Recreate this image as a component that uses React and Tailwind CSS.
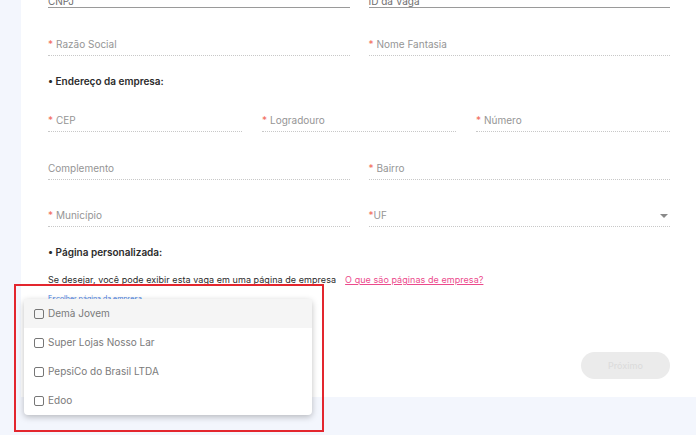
import { useState } from 'react'

const font = { fontFamily: 'Inter, "Noto Sans", sans-serif' }

function Field({ label, required, solid, className = '' }) {
  return (
    <div className={`relative ${className}`}>
      <div
        className={`h-[14px] text-[10px] leading-[14px] ${solid ? 'text-[#6f6f6f]' : 'text-[#959595]'} ${
          solid ? 'border-b border-solid border-[#9a9a9a]' : 'pb-[4px] box-content border-b border-dotted border-[#c8c8c8]'
        }`}
      >
        {required && <span className="text-[#f26b5b] mr-[3px]">*</span>}
        {label}
      </div>
    </div>
  )
}

function Heading({ children, className = '' }) {
  return (
    <div className={`h-[14px] text-[10px] leading-[14px] font-semibold text-[#2b2b2b] ${className}`}>
      • {children}
    </div>
  )
}

const empresas = ['Demà Jovem', 'Super Lojas Nosso Lar', 'PepsiCo do Brasil LTDA', 'Edoo']

export default function App() {
  const [hover, setHover] = useState(0)

  return (
    <div className="relative w-[696px] h-[435px] overflow-hidden bg-[#f3f6fd]" style={font}>
      <div className="ml-[21px] bg-white px-[26px] pb-[18px] pl-[27px]">
        <div className="-mt-[6px] grid grid-cols-2 gap-x-[19px]">
          <Field label="CNPJ" solid />
          <Field label="ID da Vaga" solid />
        </div>

        <div className="mt-[29px] grid grid-cols-2 gap-x-[19px]">
          <Field label="Razão Social" required />
          <Field label="Nome Fantasia" required />
        </div>

        <Heading className="mt-[18px]">Endereço da empresa:</Heading>

        <div className="mt-[25px] grid grid-cols-3 gap-x-[20px]">
          <Field label="CEP" required />
          <Field label="Logradouro" required />
          <Field label="Número" required />
        </div>

        <div className="mt-[29px] grid grid-cols-2 gap-x-[19px]">
          <Field label="Complemento" />
          <Field label="Bairro" required />
        </div>

        <div className="mt-[28px] grid grid-cols-2 gap-x-[19px]">
          <Field label="Município" required />
          <div className="relative">
            <div className="h-[14px] pb-[4px] box-content text-[10px] leading-[14px] text-[#959595] border-b border-dotted border-[#c8c8c8]">
              <span className="text-[#f26b5b]">*</span>UF
            </div>
            <div className="absolute right-[2px] top-[6px] w-0 h-0 border-l-[4px] border-r-[4px] border-t-[4px] border-l-transparent border-r-transparent border-t-[#8a8a8a]" />
          </div>
        </div>

        <Heading className="mt-[18px]">Página personalizada:</Heading>

        <p className="mt-[15px] h-[12px] text-[9px] leading-[12px] tracking-[0.06px] text-[#2b2b2b]">
          Se desejar, você pode exibir esta vaga em uma página de empresa
          <a href="#" className="ml-[9px] text-[#ec4a8c] underline">O que são páginas de empresa?</a>
        </p>

        <div className="mt-[8px] h-[10px] text-[7px] leading-[10px] text-[#3f7be0]">Escolher página da empresa</div>

        <div className="mt-[48px] flex justify-end">
          <button className="w-[89px] h-[27px] rounded-full bg-[#ebebeb] text-[9px] text-[#dcdcdc] font-medium">
            Próximo
          </button>
        </div>
      </div>

      <div className="absolute left-[24px] top-[299px] w-[288px] bg-white rounded-[4px] shadow-[0_2px_6px_rgba(0,0,0,0.25)]">
        {empresas.map((e, i) => (
          <div
            key={e}
            onMouseEnter={() => setHover(i)}
            className={`h-[29px] flex items-center pl-[10px] gap-[4px] text-[10px] text-[#7a7a7a] ${
              hover === i ? 'bg-[#f5f5f5]' : ''
            }`}
          >
            <span className="w-[10px] h-[10px] border-[1.5px] border-[#767676] rounded-[2px]" />
            <span>{e}</span>
          </div>
        ))}
      </div>

      <div className="absolute left-[14px] top-[284px] w-[310px] h-[148px] border-2 border-[#e3262e] pointer-events-none" />
    </div>
  )
}
